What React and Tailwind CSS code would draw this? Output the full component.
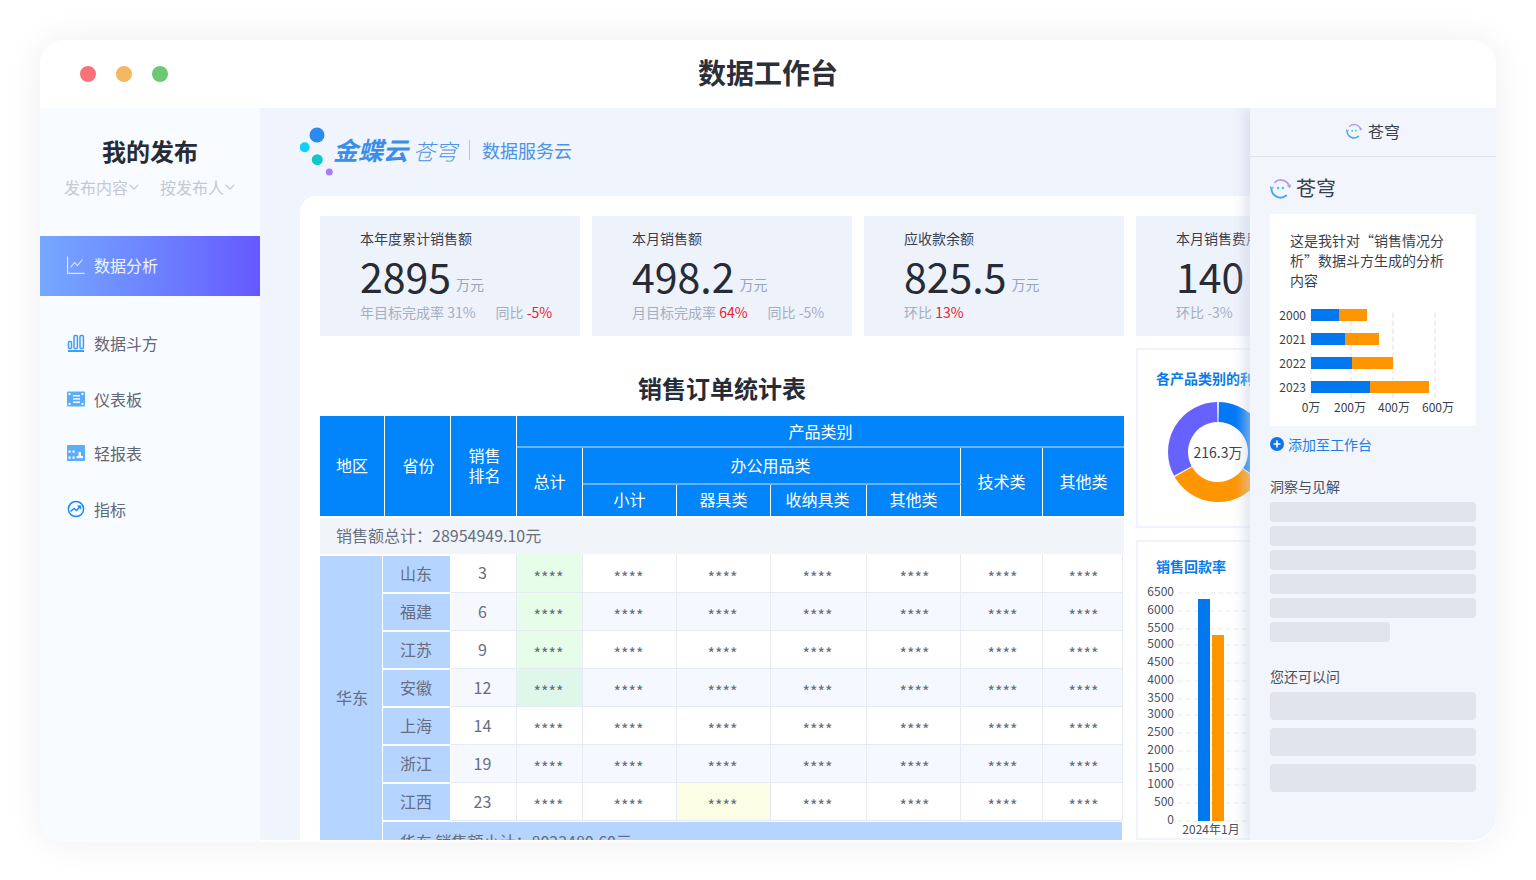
import { ChevronDown } from "lucide-react";

const kpis = [
  { title: "本年度累计销售额", value: "2895", unit: "万元" },
  { title: "本月销售额", value: "498.2", unit: "万元" },
  { title: "应收款余额", value: "825.5", unit: "万元" },
  { title: "本月销售费用", value: "140" },
];

const rows = [
  { province: "山东", rank: 3, tint: { 0: "bg-[#e5fde9]" } },
  { province: "福建", rank: 6, tint: { 0: "bg-[#e5fde9]" } },
  { province: "江苏", rank: 9, tint: { 0: "bg-[#e5fde9]" } },
  { province: "安徽", rank: 12, tint: { 0: "bg-[#def7ea]" } },
  { province: "上海", rank: 14, tint: {} },
  { province: "浙江", rank: 19, tint: {} },
  { province: "江西", rank: 23, tint: { 2: "bg-[#fbfde4]" } },
];

const dataCols = ["w-[66px]", "w-[94px]", "w-[94px]", "w-[96px]", "w-[94px]", "w-[82px]", "w-[80px]"];

const navItems = [
  { label: "数据斗方", icon: <BarsIcon />, height: "h-[56px]" },
  { label: "仪表板", icon: <BoardIcon />, height: "h-[55px]" },
  { label: "轻报表", icon: <ReportIcon />, height: "h-[54px]" },
  { label: "指标", icon: <MetricIcon />, height: "h-[57px]" },
];

const yearBars = [
  { year: "2000", y: 309, blue: 1339, orange: 1367 },
  { year: "2021", y: 333, blue: 1345, orange: 1379 },
  { year: "2022", y: 357, blue: 1352, orange: 1393 },
  { year: "2023", y: 381, blue: 1370, orange: 1429 },
];

const ticks = [
  ["6500", 592], ["6000", 610], ["5500", 628], ["5000", 644], ["4500", 662], ["4000", 680], ["3500", 698],
  ["3000", 714], ["2500", 732], ["2000", 750], ["1500", 768], ["1000", 784], ["500", 802], ["0", 820],
];

function BarsIcon() {
  return (
    <svg width="18" height="18" viewBox="0 0 18 18" fill="none" stroke="#3d9df8">
      <rect x="1.5" y="7.5" width="3" height="7" rx="1" strokeWidth="1.5" />
      <rect x="7" y="1.5" width="3.4" height="13" rx="1" strokeWidth="1.5" />
      <rect x="13" y="1.5" width="3.4" height="13" rx="1" strokeWidth="1.5" />
      <path d="M1 17h16" strokeWidth="2" />
    </svg>
  );
}

function BoardIcon() {
  return (
    <svg width="18" height="16" viewBox="0 0 18 16">
      <rect width="18" height="15" y="0.5" rx="1" fill="#5aadf9" />
      <g fill="#f2f8ff">
        <rect x="1.5" y="2" width="2" height="2" />
        <rect x="14.5" y="2" width="2" height="2" />
        <rect x="1.5" y="12" width="2" height="2" />
        <rect x="14.5" y="12" width="2" height="2" />
        <rect x="6" y="4" width="7" height="1.5" />
        <rect x="6" y="7.2" width="7" height="1.5" />
        <rect x="6" y="10.5" width="7" height="1.5" />
      </g>
    </svg>
  );
}

function ReportIcon() {
  return (
    <svg width="18" height="16" viewBox="0 0 18 16">
      <rect width="18" height="16" rx="1" fill="#5aadf9" />
      <g fill="#f2f8ff">
        <rect x="1.5" y="5.5" width="2.2" height="2.2" />
        <rect x="1.5" y="11.5" width="2.2" height="2.2" />
        <rect x="5.5" y="5.5" width="2.2" height="2.2" />
        <rect x="5.5" y="11.5" width="2.2" height="2.2" />
        <rect x="9.5" y="11" width="6.5" height="2.2" />
        <rect x="11.5" y="7" width="2.5" height="4" />
      </g>
    </svg>
  );
}

function MetricIcon() {
  return (
    <svg width="18" height="18" viewBox="0 0 18 18" fill="none" stroke="#1a8cfa" strokeWidth="1.5">
      <circle cx="9" cy="9" r="7.6" />
      <path d="M3.5 11.5l3.5-3 2.5 2 3.5-4" />
      <path d="M10.5 5.8h3.4v3.4z" fill="#1a8cfa" strokeWidth="0.6" />
    </svg>
  );
}

function CangqiongIcon({ size }) {
  return (
    <svg width={size} height={size} viewBox="0 0 22 22" fill="none" strokeLinecap="round">
      <path d="M5 4.5A9.5 9.5 0 0 1 20.4 9" stroke="#b79af5" strokeWidth="1.8" />
      <path d="M18.5 8.2l2 1.4 1-2.2" stroke="#b79af5" strokeWidth="1.2" />
      <path d="M1.5 11A9.5 9.5 0 0 0 17 18.4" stroke="#4aa5f5" strokeWidth="2" />
      <path d="M1.5 11l-1-1.8M1.5 11l1.8-1.2" stroke="#4aa5f5" strokeWidth="1.2" />
      <circle cx="8.5" cy="10.5" r="1.3" fill="#2cd5e6" />
      <circle cx="13.5" cy="10.5" r="1.3" fill="#2cd5e6" />
    </svg>
  );
}

const polar = (angle, radius = 40) => {
  const rad = ((angle - 90) * Math.PI) / 180;
  return [1218 + radius * Math.cos(rad), 452 + radius * Math.sin(rad)];
};

const arc = (start, end) => {
  const [x1, y1] = polar(start);
  const [x2, y2] = polar(end);
  return `M${x1} ${y1}A40 40 0 ${end - start > 180 ? 1 : 0} 1 ${x2} ${y2}`;
};

function Sidebar() {
  return (
    <aside className="w-[220px] h-[734px] shrink-0 bg-[#f8fbff] rounded-bl-3xl">
      <h2 className="pt-[26px] text-center text-[24px] leading-[34px] font-bold text-[#262b36]">我的发布</h2>
      <div className="mt-[7px] flex justify-center gap-[20px] text-[16px] leading-6 text-[#c3c8d3]">
        <span className="flex items-center">发布内容<ChevronDown size={16} strokeWidth={1.6} className="-mx-[2px]" /></span>
        <span className="flex items-center">按发布人<ChevronDown size={16} strokeWidth={1.6} className="-mx-[2px]" /></span>
      </div>
      <div className="mt-[37px] flex h-[60px] items-center gap-[9px] bg-linear-to-r from-[#76a8ff] to-[#6658ff] pb-[2px] pl-[27px] text-[16px] text-white/90">
        <svg width="18" height="18" viewBox="0 0 18 18" fill="none" stroke="#dfe6ff" strokeWidth="1.1">
          <path d="M.6.5v16.9h17" />
          <path d="M3.5 11.5L7.5 6.5l3 3 5-6" />
        </svg>
        数据分析
      </div>
      <nav className="mt-[20px]">
        {navItems.map((item) => (
          <div key={item.label} className={`flex items-center ${item.height} pb-[2px] pl-[27px] text-[16px] text-[#5f6675]`}>
            <span className="flex w-[27px]">{item.icon}</span>
            {item.label}
          </div>
        ))}
      </nav>
    </aside>
  );
}

function KpiCard({ kpi, index }) {
  return (
    <div className="h-[120px] w-[260px] shrink-0 bg-[#eef2fb] pl-[40px] pt-[12px]">
      <div className="text-[14px] leading-5 text-[#3a3f4e] whitespace-nowrap">{kpi.title}</div>
      <div className="mt-[3px] flex h-[48px] items-baseline gap-[5px]">
        <span className="text-[41px] leading-[48px] text-[#262b36]">{kpi.value}</span>
        {kpi.unit && <span className="-translate-y-[3px] text-[14px] text-[#9aa5b8]">{kpi.unit}</span>}
      </div>
      <div className="mt-[3px] flex gap-[20px] text-[14px] leading-5 text-[#a4afc2]">
        {index === 0 && (
          <>
            <span>年目标完成率 31%</span>
            <span>同比 <span className="text-[#e8232e]">-5%</span></span>
          </>
        )}
        {index === 1 && (
          <>
            <span>月目标完成率 <span className="text-[#e8232e]">64%</span></span>
            <span>同比 -5%</span>
          </>
        )}
        {index === 2 && <span>环比 <span className="text-[#e8232e]">13%</span></span>}
        {index === 3 && <span>环比 -3%</span>}
      </div>
    </div>
  );
}

function TableHeader() {
  const cell = "flex items-center justify-center text-white text-[16px] text-center";
  return (
    <div className="grid h-[100px] grid-cols-[65px_66px_66px_66px_94px_94px_96px_94px_82px_81px] grid-rows-[32px_37px_31px] bg-[#0285fb]">
      <div className={`${cell} row-span-3 border-r border-white pb-[2px]`}>地区</div>
      <div className={`${cell} row-span-3 border-r border-white pb-[2px] pl-[2px]`}>省份</div>
      <div className={`${cell} row-span-3 border-r border-white pb-[2px] pl-[2px] leading-5`}>销售<br />排名</div>
      <div className={`${cell} col-span-7 border-b-2 border-[#66b3ff]`}>产品类别</div>
      <div className={`${cell} row-span-2 border-r border-white pb-[2px]`}>总计</div>
      <div className={`${cell} col-span-4 border-r border-b-2 border-r-white border-b-[#66b3ff] pb-[2px] pr-[2px]`}>办公用品类</div>
      <div className={`${cell} row-span-2 border-r border-white pb-[2px]`}>技术类</div>
      <div className={`${cell} row-span-2 pb-[2px]`}>其他类</div>
      <div className={`${cell} border-r border-white pb-[3px]`}>小计</div>
      <div className={`${cell} border-r border-white pb-[3px]`}>器具类</div>
      <div className={`${cell} border-r border-white pb-[3px] pr-[2px]`}>收纳具类</div>
      <div className={`${cell} border-r border-white pb-[3px]`}>其他类</div>
    </div>
  );
}

function SalesTable() {
  return (
    <div className="w-[804px] shrink-0">
      <h3 className="flex h-[80px] items-center justify-center pt-[24px] text-[24px] font-bold text-[#262b36]">销售订单统计表</h3>
      <TableHeader />
      <div className="mt-[2px] flex h-[36px] items-center bg-[#f1f4f9] pb-[2px] pl-[16px] text-[16px] text-[#666e80]">
        销售额总计：28954949.10元
      </div>
      <div className="flex">
        <div className="mt-[2px] flex h-[284px] w-[62px] items-center justify-center bg-[#b5d4ff] pb-[2px] pl-[2px] text-[16px] text-[#666e80]">华东</div>
        <div className="ml-[1px]">
          {rows.map((row, rowIndex) => (
            <div key={row.province} className={`flex ${rowIndex === 0 ? "h-[39px]" : "h-[38px]"}`}>
              <div className="mb-[1px] mr-[1px] flex h-[36px] w-[67px] items-center justify-center self-end bg-[#b5d4ff] pb-[2px] pr-[1px] text-[16px] text-[#666e80]">
                {row.province}
              </div>
              <div className={`flex w-[66px] items-center justify-center border-r border-b border-[#e6ebf3] pb-[2px] pr-[2px] text-[16px] text-[#666e80] ${rowIndex % 2 ? "bg-[#f5f8fe]" : "bg-white"}`}>
                {row.rank}
              </div>
              {dataCols.map((width, colIndex) => (
                <div
                  key={colIndex}
                  className={`flex items-center justify-center border-r border-b border-[#e6ebf3] pt-[7px] text-[16px] leading-none text-[#666e80] ${colIndex < 4 ? "pr-[2px]" : "pl-[2px]"} ${width} ${row.tint[colIndex] || (rowIndex % 2 ? "bg-[#f5f8fe]" : "bg-white")}`}
                >
                  ****
                </div>
              ))}
            </div>
          ))}
          <div className="mt-[1px] flex h-[38px] w-[739px] items-center bg-[#b5d4ff] pl-[17px] text-[16px] text-[#666e80]">
            华东 销售额小计：8023480.60元
          </div>
        </div>
      </div>
    </div>
  );
}

function ChartColumn() {
  return (
    <div className="ml-[12px] mt-[12px] w-[200px] shrink-0">
      <div className="h-[180px] border-2 border-[#eff3fc]">
        <div className="pl-[18px] pt-[18px] text-[14px] leading-5 font-bold text-[#0a7be8] whitespace-nowrap">各产品类别的利润</div>
        <svg width="196" height="120" viewBox="1138 392 196 120" className="mt-[4px]" fill="none">
          <path d={arc(1, 123)} stroke="#0178f5" strokeWidth="20" />
          <path d={arc(124.5, 240)} stroke="#ff9500" strokeWidth="20" />
          <path d={arc(241.5, 359)} stroke="#6661ff" strokeWidth="20" />
          <text x="1218" y="458" textAnchor="middle" fontSize="14" fill="#3a3f4e">216.3万</text>
        </svg>
      </div>
      <div className="mt-[12px] h-[300px] border-2 border-[#eff3fc]">
        <div className="pl-[18px] pt-[14px] text-[14px] leading-5 font-bold text-[#0a7be8]">销售回款率</div>
        <svg width="196" height="262" viewBox="1138 577 196 262" fill="none" className="mt-[1px]">
          {ticks.map(([label, y]) => (
            <g key={label}>
              <path d={`M1178 ${y + 1}H1334`} stroke="#e8eaee" strokeWidth="1" strokeDasharray="5 3" />
              <text x="1174" y={y + 4} textAnchor="end" fontSize="12" fill="#4a4f5e">{label}</text>
            </g>
          ))}
          <rect x="1198" y="599" width="12" height="222" fill="#0178f0" />
          <rect x="1212" y="635" width="12" height="186" fill="#ff9500" />
          <text x="1211" y="834" textAnchor="middle" fontSize="12" fill="#4a4f5e">2024年1月</text>
        </svg>
      </div>
    </div>
  );
}

function AssistantPanel() {
  return (
    <div className="absolute inset-y-0 right-0 w-[246px] rounded-br-3xl bg-[#f2f5fb] shadow-[-6px_0_12px_rgba(205,212,228,0.6)]">
      <div className="flex h-[49px] items-center justify-center gap-[6px] border-b border-[#dfe3eb] pb-[2px] text-[16px] text-[#3a3f4e]">
        <CangqiongIcon size={16} />
        苍穹
      </div>
      <div className="px-[20px]">
        <div className="mt-[17px] flex h-[28px] items-center gap-[5px] text-[20px] text-[#3a3f4e]">
          <CangqiongIcon size={21} />
          苍穹
        </div>
        <div className="mt-[12px] h-[212px] bg-white">
          <p className="px-[20px] pt-[16px] text-[14px] leading-5 text-[#3a3f4e]">这是我针对“销售情况分析”数据斗方生成的分析内容</p>
          <svg width="206" height="120" viewBox="1270 300 206 120" fill="none" className="mt-[10px]">
            {[1311, 1351, 1393, 1435].map((x) => (
              <path key={x} d={`M${x} 313V398`} stroke="#dfe1e5" strokeWidth="1" strokeDasharray="5 3" />
            ))}
            {yearBars.map((bar) => (
              <g key={bar.year}>
                <text x="1306" y={bar.y + 11} textAnchor="end" fontSize="12" fill="#3a3f4e">{bar.year}</text>
                <rect x="1311" y={bar.y} width={bar.blue - 1311} height="12" fill="#0178f0" />
                <rect x={bar.blue} y={bar.y} width={bar.orange - bar.blue} height="12" fill="#ff9500" />
              </g>
            ))}
            {[["0万", 1311], ["200万", 1350], ["400万", 1394], ["600万", 1438]].map(([label, x]) => (
              <text key={label} x={x} y="412" textAnchor="middle" fontSize="12" fill="#3a3f4e">{label}</text>
            ))}
          </svg>
        </div>
        <div className="mt-[8px] flex h-[20px] items-center gap-[4px] text-[14px] text-[#1a7ee8]">
          <svg width="14" height="14" viewBox="0 0 14 14">
            <circle cx="7" cy="7" r="7" fill="#0e74e8" />
            <path d="M3.5 7h7M7 3.5v7" stroke="#fff" strokeWidth="1.6" />
          </svg>
          添加至工作台
        </div>
        <div className="mt-[22px] text-[14px] leading-5 text-[#4a5060]">洞察与见解</div>
        <div className="mt-[6px] flex flex-col gap-[4px]">
          {[0, 1, 2, 3, 4].map((i) => (
            <div key={i} className="h-[20px] rounded-sm bg-[#e0e4ec]" />
          ))}
          <div className="h-[20px] w-[120px] rounded-sm bg-[#e0e4ec]" />
        </div>
        <div className="mt-[24px] text-[14px] leading-5 text-[#4a5060]">您还可以问</div>
        <div className="mt-[6px] flex flex-col gap-[8px]">
          {[0, 1, 2].map((i) => (
            <div key={i} className="h-[28px] rounded-sm bg-[#e0e4ec]" />
          ))}
        </div>
      </div>
    </div>
  );
}

function Logo() {
  return (
    <div className="flex h-[88px]">
      <svg width="35" height="88" viewBox="0 0 35 88" className="shrink-0">
        <circle cx="17" cy="27" r="7.5" fill="#2a8aee" />
        <circle cx="4.7" cy="39.3" r="5" fill="#0fcffc" />
        <circle cx="17.3" cy="51.7" r="5.5" fill="#0fc8c8" />
        <circle cx="29.3" cy="64" r="3.5" fill="#a77cf5" />
      </svg>
      <div className="-ml-[2px] flex items-center pb-[5px]">
        <span className="text-[25px] leading-none font-bold italic text-[#3b8ee8]">金蝶云</span>
        <span className="ml-[5px] text-[22px] leading-none font-light italic text-[#4a93e6]">苍穹</span>
        <span className="mx-[12px] h-[20px] w-px bg-[#a9c9ef]" />
        <span className="text-[18px] leading-none text-[#4a93e6]">数据服务云</span>
      </div>
    </div>
  );
}

export default function App() {
  return (
    <div className="h-[880px] overflow-hidden bg-white pl-[40px] pt-[40px] font-['Noto_Sans_CJK_SC','Noto_Sans',sans-serif]">
      <div className="w-[1456px] rounded-3xl shadow-[0_0_36px_rgba(0,0,0,0.07)]">
        <header className="relative flex h-[68px] items-center justify-center rounded-t-3xl bg-white">
          <div className="absolute left-[40px] flex gap-[20px]">
            <span className="size-4 rounded-full bg-[#f87378]" />
            <span className="size-4 rounded-full bg-[#f5b75f]" />
            <span className="size-4 rounded-full bg-[#6cc872]" />
          </div>
          <h1 className="pb-[4px] text-[28px] font-bold text-[#2b2f3a]">数据工作台</h1>
        </header>
        <div className="flex items-start">
          <Sidebar />
          <main className="relative h-[732px] w-[1236px] overflow-hidden rounded-br-3xl bg-[#f0f4fc] pl-[40px]">
            <Logo />
            <div className="h-[644px] rounded-tl-2xl bg-white p-[20px]">
              <div className="flex gap-[12px]">
                {kpis.map((kpi, index) => (
                  <KpiCard key={kpi.title} kpi={kpi} index={index} />
                ))}
              </div>
              <div className="flex">
                <SalesTable />
                <ChartColumn />
              </div>
            </div>
            <AssistantPanel />
          </main>
        </div>
      </div>
    </div>
  );
}
